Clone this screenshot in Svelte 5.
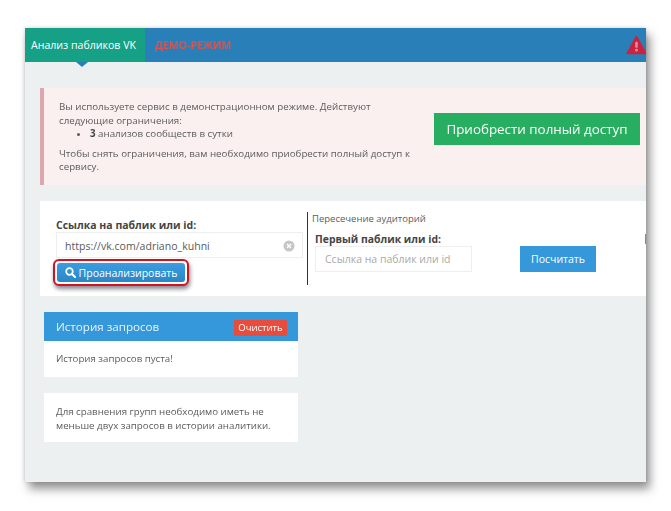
<script>
  const title = 'Анализ пабликов VK';
</script>

<div class="page">
<div class="window">
  <header class="topbar">
    <div class="tab">{title}<span class="notch"></span></div>
    <div class="demo">ДЕМО-РЕЖИМ</div>
    <svg class="warn" width="21" height="20" viewBox="0 0 22 20" aria-hidden="true">
      <path d="M11 1 L21 19 H1 Z" fill="#c9233f" stroke="#c9233f" stroke-width="1.5" stroke-linejoin="round"/>
      <rect x="9.6" y="6.5" width="2.8" height="6.5" rx="1" fill="#d98a96"/>
      <rect x="9.6" y="14" width="2.8" height="2.8" rx="0.8" fill="#d98a96"/>
    </svg>
  </header>

  <section class="alert">
    <div class="alert-text">
      <p>Вы используете сервис в демонстрационном режиме. Действуют следующие ограничения:</p>
      <ul><li><b>3</b> анализов сообществ в сутки</li></ul>
      <p class="after">Чтобы снять ограничения, вам необходимо приобрести полный доступ к сервису.</p>
    </div>
    <button class="buy">Приобрести полный доступ</button>
  </section>

  <section class="card">
    <div class="col-left">
      <div class="label">Ссылка на паблик или id:</div>
      <div class="input filled">
        <span>https://vk.com/adriano_kuhni</span>
        <svg width="12" height="12" viewBox="0 0 12 12" aria-hidden="true">
          <circle cx="6" cy="6" r="5.5" fill="#c4c6c8"/>
          <path d="M4 4 L8 8 M8 4 L4 8" stroke="#fff" stroke-width="1.5"/>
        </svg>
      </div>
      <div class="highlight">
        <button class="analyze">
          <svg width="11" height="11" viewBox="0 0 11 11" aria-hidden="true">
            <circle cx="4.5" cy="4.5" r="3.3" fill="none" stroke="#fff" stroke-width="1.7"/>
            <path d="M7 7 L10 10" stroke="#fff" stroke-width="2" stroke-linecap="round"/>
          </svg>
          Проанализировать
        </button>
      </div>
    </div>
    <div class="col-right">
      <div class="cross-title">Пересечение аудиторий</div>
      <div class="label second">Первый паблик или id:</div>
      <div class="row">
        <div class="input empty">Ссылка на паблик или id</div>
        <button class="count">Посчитать</button>
      </div>
    </div>
    <span class="cut"></span>
  </section>

  <section class="panel history">
    <div class="panel-head">
      <span>История запросов</span>
      <button class="clear">Очистить</button>
    </div>
    <div class="panel-body">История запросов пуста!</div>
  </section>

  <section class="panel note">
    Для сравнения групп необходимо иметь не меньше двух запросов в истории аналитики.
  </section>
</div>
</div>

<style>
  :global(body) {
    margin: 0;
    background: #fff;
    font-family: "Open Sans", "Noto Sans", sans-serif;
  }
  .page {
    box-sizing: border-box;
    width: 671px;
    height: 511px;
    padding: 28px 0 0 25px;
    overflow: hidden;
    filter: blur(0.4px);
  }
  .window {
    box-sizing: border-box;
    width: 621px;
    height: 454px;
    background: #ecf0f1;
    box-shadow: 4px 7px 9px rgba(60, 60, 60, 0.55), 0 0 4px rgba(0, 0, 0, 0.18);
    overflow: hidden;
    color: #5c5c5c;
    font-size: 9.75px;
  }
  .topbar {
    display: flex;
    align-items: center;
    height: 34px;
    background: #2980b9;
  }
  .tab {
    position: relative;
    box-sizing: border-box;
    width: 120px;
    height: 34px;
    padding-left: 6px;
    background: #16a085;
    color: #fff;
    font-size: 10.6px;
    line-height: 34px;
    white-space: nowrap;
  }
  .notch {
    position: absolute;
    left: 51px;
    top: 34px;
    border: 6px solid transparent;
    border-bottom-width: 0;
    border-top: 5px solid #2980b9;
  }
  .demo {
    margin-left: 10px;
    color: #d9534f;
    font-size: 10.5px;
    font-weight: 700;
  }
  .warn {
    margin-left: auto;
    margin-right: -1px;
  }
  .alert {
    display: flex;
    align-items: center;
    box-sizing: border-box;
    height: 97px;
    margin: 26px 0 0 15px;
    padding-left: 15px;
    background: #f9f0ef;
    border-left: 4px solid #dca7af;
  }
  .alert-text {
    width: 356px;
    line-height: 13.4px;
    margin-top: 1px;
  }
  .alert p { margin: 0; }
  .alert ul { margin: 0; padding-left: 31px; }
  .alert .after { margin-top: 6px; }
  .alert b { color: #444; }
  button {
    border: none;
    font-family: inherit;
    color: #fff;
    padding: 0;
  }
  .buy {
    width: 206px;
    height: 32px;
    margin-left: 19px;
    margin-top: -16px;
    background: #27ae60;
    font-size: 13.4px;
  }
  .card {
    position: relative;
    display: flex;
    height: 95px;
    margin: 16px 0 0 15px;
    background: #fff;
    box-sizing: border-box;
  }
  .col-left {
    box-sizing: border-box;
    width: 252px;
    padding: 18px 0 0 16px;
  }
  .label {
    color: #444;
    font-size: 10.5px;
    font-weight: 700;
    line-height: 13px;
  }
  .input {
    box-sizing: border-box;
    display: flex;
    align-items: center;
    height: 26px;
    border: 1px solid #eceeef;
    background: #fff;
  }
  .filled {
    width: 247px;
    padding: 2px 7px 0 8px;
    justify-content: space-between;
    font-size: 10.55px;
    color: #5a5a5a;
  }
  .highlight {
    width: 136px;
    height: 27px;
    box-sizing: border-box;
    margin: 2px 0 0 -3px;
    padding: 2px;
    border: 2px solid #d4121f;
    border-radius: 6px;
    background: #fff;
    box-shadow: 1px 3px 4px rgba(40, 40, 60, 0.55);
    position: relative;
    top: -1px;
  }
  .analyze {
    display: flex;
    align-items: center;
    justify-content: center;
    gap: 3px;
    width: 100%;
    height: 100%;
    border-radius: 3px;
    background: linear-gradient(#3a9de0, #2a86c6);
    font-size: 10.5px;
  }
  .col-right {
    box-sizing: border-box;
    margin: 11px 0 0 15px;
    height: 73px;
    padding-left: 4px;
    border-left: 1px solid #333;
    flex: 1;
  }
  .cross-title {
    font-size: 9.5px;
    line-height: 14px;
  }
  .second {
    margin: 7px 0 0 3px;
    font-size: 10.4px;
  }
  .row {
    display: flex;
    margin: 0 0 0 3px;
  }
  .empty {
    width: 157px;
    padding-left: 9px;
    color: #aaa;
    font-size: 10.5px;
  }
  .count {
    width: 76px;
    height: 26px;
    margin-left: 48px;
    background: #3498db;
    font-size: 10.5px;
  }
  .cut {
    position: absolute;
    right: 0;
    top: 33px;
    width: 1px;
    height: 10px;
    background: #888;
  }
  .panel {
    width: 254px;
    margin-left: 19px;
    background: #fff;
  }
  .history { margin-top: 16px; }
  .panel-head {
    display: flex;
    align-items: center;
    justify-content: space-between;
    height: 29px;
    padding: 0 11px 0 12px;
    box-sizing: border-box;
    background: #3498db;
    color: #e9f3fb;
    font-size: 11.6px;
  }
  .clear {
    width: 53px;
    height: 16px;
    margin-top: 2px;
    background: #e74c3c;
    border-radius: 1px;
    font-size: 9.5px;
  }
  .panel-body {
    height: 36px;
    padding-left: 12px;
    line-height: 36px;
    font-size: 9.7px;
  }
  .note {
    box-sizing: border-box;
    height: 49px;
    margin-top: 16px;
    padding: 12px 12px 0;
    font-size: 9.73px;
    line-height: 14px;
  }
</style>
